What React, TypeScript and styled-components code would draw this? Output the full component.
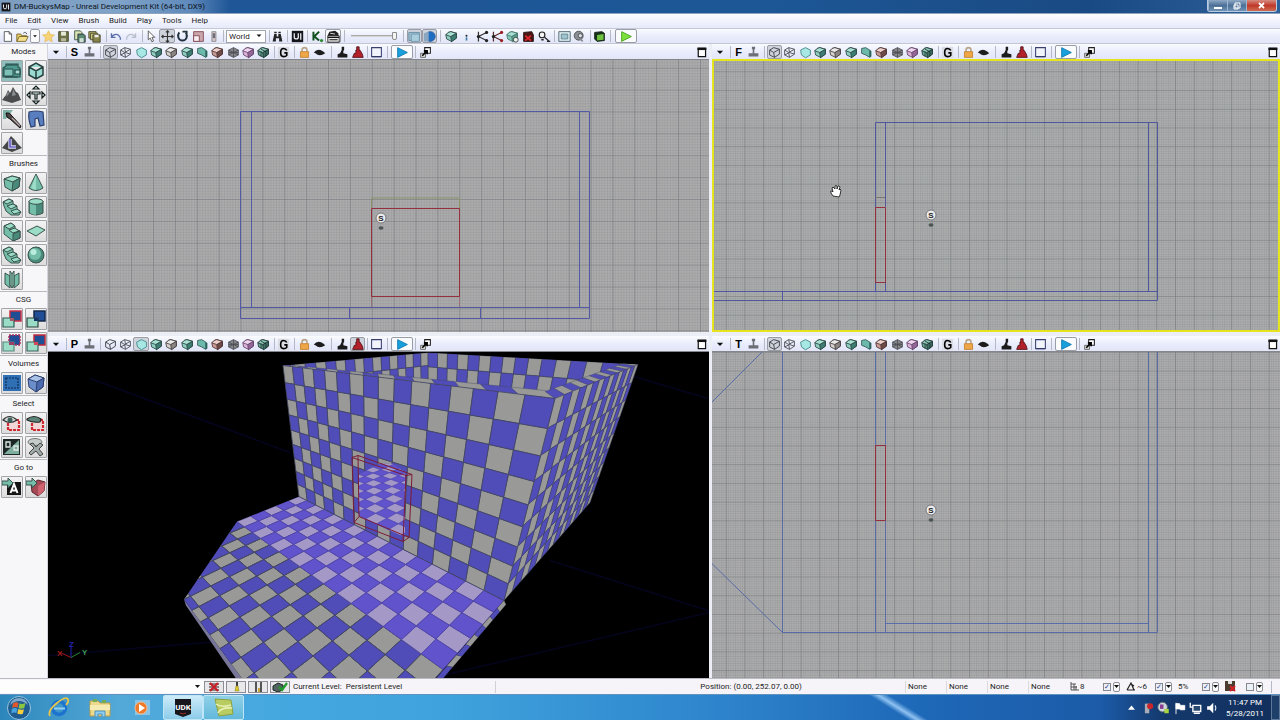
import React from 'react';
import styled, { createGlobalStyle, css } from 'styled-components';

const GlobalStyle = createGlobalStyle`
  * { box-sizing: border-box; }
  body { margin: 0; background: #f4f5fb; }
  body, button, input, select { font-family: Roboto, "Open Sans", sans-serif; font-size: 8px; line-height: 12px; color: #1c1c24; }
  button, select, input { margin: 0; padding: 0; }
`;

/* ---------- shell ---------- */

const Window = styled.div`
  display: flex;
  flex-direction: column;
  min-height: 100vh;
`;

const TitleBar = styled.header`
  display: flex;
  align-items: center;
  height: 14px;
  padding: 0 3px 0 1px;
  gap: 3px;
  background: linear-gradient(90deg, #7d9dc0 0, #7fa3c9 120px, #5f8abb 190px, #1f5697 230px, #1d5796 60%, #1a4a83 85%, #2d5f98 100%);
  border-bottom: 1px solid #8fa3be;
`;

const AppTitle = styled.h1`
  flex: 1;
  margin: 0;
  font-size: 8px;
  font-weight: 400;
  line-height: 12px;
  color: #0d1420;
`;

const CaptionButtons = styled.div`
  display: flex;
  align-self: flex-start;
  height: 12px;
  border: 1px solid #b9cce2;
  border-top: 0;
  border-radius: 0 0 3px 3px;
  overflow: hidden;
`;

const CaptionButton = styled.button<{ $close?: boolean }>`
  display: grid;
  place-items: center;
  width: ${(p) => (p.$close ? 30 : 19)}px;
  border: 0;
  border-left: 1px solid #9db6d0;
  background: ${(p) =>
    p.$close ? 'linear-gradient(#d58c80, #c0392a 50%, #cf6c50)' : 'linear-gradient(#8fa9c4, #4d7098 50%, #6f92b4)'};
`;

const MenuBar = styled.nav`
  display: flex;
  align-items: center;
  gap: 10px;
  height: 15px;
  padding: 0 5px;
  background: linear-gradient(#fdfdff, #e6eafa);
  border-bottom: 1px solid #c5c9d6;
`;

const MenuLink = styled.a`
  color: #1c1c24;
  text-decoration: none;
`;

const barBase = css`
  display: flex;
  align-items: center;
  background: linear-gradient(#fafbff, #e7ebfb 60%, #e2e6f6);
`;

const ToolBar = styled.div`
  ${barBase}
  height: 15px;
  border-bottom: 1px solid #c3c6d4;
`;

const ToolButton = styled.button<{ $pressed?: boolean; $framed?: boolean; $w?: number }>`
  display: grid;
  place-items: center;
  flex: none;
  width: ${(p) => p.$w ?? 15}px;
  height: 14px;
  border: 1px solid ${(p) => (p.$pressed || p.$framed ? '#9a9ca6' : 'transparent')};
  border-radius: 2px;
  background: ${(p) => (p.$pressed ? '#cfd3dc' : p.$framed ? '#fafbfd' : 'transparent')};
`;

const Separator = styled.span<{ $l?: number; $r?: number }>`
  flex: none;
  width: 1px;
  height: 12px;
  margin: 0 ${(p) => p.$r ?? 4}px 0 ${(p) => p.$l ?? 4}px;
  background: #b5b9c6;
`;

const SelectWrap = styled.label`
  display: grid;
  grid-template-columns: 1fr 10px;
  align-items: center;
  width: 40px;
  height: 13px;
  border: 1px solid #a3a5ad;
  background: #fff;
`;

const Select = styled.select`
  grid-column: 1 / -1;
  grid-row: 1;
  width: 100%;
  height: 11px;
  padding-left: 2px;
  border: 0;
  appearance: none;
  background: transparent;
  line-height: 11px;
`;

const SelectArrow = styled.svg`
  grid-column: 2;
  grid-row: 1;
  pointer-events: none;
`;

const Slider = styled.input`
  appearance: none;
  width: 46px;
  height: 12px;
  background: transparent;
  &::-webkit-slider-runnable-track { height: 2px; background: #d4d3cf; border-top: 1px solid #a9a9a9; }
  &::-webkit-slider-thumb { appearance: none; width: 5px; height: 8px; margin-top: -4px; background: #f4f4f2; border: 1px solid #8d8d8d; border-radius: 0 0 2px 2px; }
`;

const Main = styled.main`
  display: flex;
  flex: 1;
  min-height: 0;
`;

/* ---------- side palette ---------- */

const Palette = styled.aside`
  flex: none;
  width: 48px;
  background: #f7f7fa;
  border-right: 1px solid #d4d4dc;
`;

const PaletteSection = styled.section`
  padding: 0 1px;
  & + & { border-top: 1px solid #b9b9c0; }
`;

const PaletteTitle = styled.h2`
  margin: 0;
  height: 16px;
  font-size: 8px;
  font-weight: 400;
  line-height: 16px;
  text-align: center;
`;

const PaletteGrid = styled.div`
  display: grid;
  grid-template-columns: 22px 22px;
  column-gap: 2px;
  row-gap: 2px;
  padding-bottom: 1px;
`;

const PaletteButton = styled.button<{ $active?: boolean }>`
  display: grid;
  place-items: center;
  width: 22px;
  height: 22px;
  border: 1px solid #a2a4a8;
  border-radius: 1px;
  background: ${(p) => (p.$active ? '#8fc0bd' : 'linear-gradient(#f3f3f3, #dcdcdc)')};
`;

/* ---------- viewports ---------- */

const Viewports = styled.div`
  flex: 1;
  display: grid;
  grid-template-columns: 661fr 568fr;
  grid-template-rows: 288fr 342fr;
  column-gap: 3px;
  row-gap: 4px;
  min-width: 0;
  background: #eceef6;
`;

const Viewport = styled.section`
  display: flex;
  flex-direction: column;
  min-width: 0;
  min-height: 0;
`;

const ViewBar = styled.div`
  ${barBase}
  flex: none;
  height: 15px;
`;

const Spacer = styled.span`
  flex: 1;
`;

const ViewName = styled.strong`
  width: 15px;
  font-family: "Liberation Sans", Arial, sans-serif;
  font-size: 11px;
  line-height: 14px;
  text-align: center;
  color: #000;
`;

const Canvas = styled.div<{ $active?: boolean }>`
  flex: 1;
  display: grid;
  min-height: 0;
  overflow: hidden;
  background: #a5a6a7;
  border: ${(p) => (p.$active ? '2px solid #e6e41e' : '0')};
  border-top: ${(p) => (p.$active ? '2px solid #e6e41e' : '1px solid #85868c')};
`;

const Scene = styled.svg`
  display: block;
  width: 100%;
  height: 100%;
  min-height: 0;
  contain: size;
`;

/* ---------- status bar and taskbar ---------- */

const StatusBar = styled.footer`
  display: flex;
  align-items: center;
  height: 16px;
  border-top: 1px solid #b9bac2;
  background: #f6f4f8;
`;

const CommandBox = styled.label`
  display: flex;
  align-items: center;
  width: 204px;
  height: 13px;
  padding-right: 4px;
  background: #fdfdfe;
`;

const CommandInput = styled.input`
  flex: 1;
  min-width: 0;
  height: 11px;
  border: 0;
  background: transparent;
`;

const StatusButtons = styled.div`
  display: flex;
  gap: 2px;
  margin-right: 3px;
`;

const StatusButton = styled.button`
  display: grid;
  place-items: center;
  width: 20px;
  height: 12px;
  border: 1px solid #8d8f96;
  background: #e8e8ea;
`;

const StatusText = styled.span<{ $w?: number }>`
  flex: none;
  width: ${(p) => (p.$w ? `${p.$w}px` : 'auto')};
  white-space: pre;
`;

const StatusFlex = styled.span<{ $grow: number }>`
  flex: ${(p) => p.$grow} 1 0;
  white-space: pre;
  & + & { border-left: 1px solid #d0d0d6; }
`;

const StatusCell = styled(StatusText)`
  padding-left: 2px;
  border-left: 1px solid #d9d9de;
`;

const SnapGroup = styled.div<{ $w: number }>`
  display: flex;
  align-items: center;
  justify-content: flex-end;
  gap: 2px;
  width: ${(p) => p.$w}px;
`;

const SnapLabel = styled.label`
  display: flex;
  align-items: center;
  flex: 1;
  gap: 1px;
`;

const CheckBox = styled.input`
  appearance: none;
  display: grid;
  place-items: center;
  width: 8px;
  height: 8px;
  border: 1px solid #85888f;
  background: #eef0f8;
  &:checked::before { content: '✓'; font: bold 7px/6px "DejaVu Sans", sans-serif; color: #2b3f86; }
`;

const DropButton = styled.button`
  display: grid;
  place-items: center;
  width: 7px;
  height: 10px;
  border: 1px solid #8d8f96;
  border-radius: 2px;
  background: #fafafa;
`;

const TaskBar = styled.div`
  display: flex;
  align-items: center;
  height: 26px;
  border-top: 1px solid #5e93c2;
  background:
    linear-gradient(32deg, transparent 0 42%, rgba(170, 215, 255, 0.8) 49%, transparent 57%) calc(100% - 335px) 0 / 90px 26px no-repeat,
    linear-gradient(90deg, #2d86bb 0, #53a9d8 120px, #47a9e0 240px, #3fa2dc 35%, #2f86cd 55%, #1e68b8 72%, #1c5ba8 86%, #14386c 91%, #122f5c 100%);
`;

const TaskButton = styled.button<{ $w: number; $state?: 'open' | 'active' }>`
  display: grid;
  place-items: center;
  width: ${(p) => p.$w}px;
  height: 25px;
  border: 1px solid ${(p) => (p.$state ? '#bfe6f7' : 'transparent')};
  border-radius: 2px;
  background: ${(p) =>
    p.$state === 'active'
      ? 'linear-gradient(#cdebf8, #8ccbea)'
      : p.$state === 'open'
        ? 'linear-gradient(#8fd0e6, #62b8dc)'
        : 'transparent'};
`;

const Tray = styled.div`
  display: flex;
  align-items: center;
  margin-left: auto;
  gap: 1px;
`;

const Clock = styled.time`
  display: flex;
  flex-direction: column;
  align-items: center;
  width: 50px;
  padding-top: 1px;
  color: #fff;
  font-size: 8px;
  line-height: 11px;
`;

const ShowDesktop = styled.button`
  width: 9px;
  height: 25px;
  border: 1px solid #5d7899;
  background: #1f3f6b;
`;

/* ---------- icons ---------- */

function Cube({ top = '#a9e0d4', left = '#8fcfc2', right = '#3e7d74', line = '#26403e' }) {
  return (
    <g stroke={line} strokeWidth="1" strokeLinejoin="round">
      <path d="M1 6q3-4 6-4l7 2v6l-6 4-6-3z" fill={left} />
      <path d="M7 8l7-4v6l-6 4.500z" fill={right} />
      <path d="M1 6q3-4 6-4l7 2-7 4z" fill={top} />
    </g>
  );
}

const glyphs: Record<string, React.ReactNode> = {
  down: <path d="M3 6h10l-5 5z" fill="#111" />,
  file: <path d="M4 2h6l3 3v9H4zM10 2v3h3" fill="#fff" stroke="#444" />,
  folder: <><path d="M1 14V5h5l1 2h6v2" fill="#e8cf6a" stroke="#6d5a1a" /><path d="M1 14l3-6h11l-3 6z" fill="#f4e08c" stroke="#6d5a1a" /><path d="M9 4c2-2 4-1 4 1" fill="none" stroke="#333" /></>,
  star: <path d="M8 1l2.200 4.600 5 .6-3.700 3.400 1 5L8 12l-4.500 2.600 1-5L.800 6.200l5-.6z" fill="#f7d377" stroke="#e6bd5a" />,
  save: <><path d="M2 2h12v12H2z" fill="#6d7145" stroke="#44462a" /><path d="M5 2h6v5H5z" fill="#e8ead8" /><path d="M5 10h6v4H5z" fill="#b7b99d" /></>,
  saveAll: <><path d="M2 1h7l2 2v9H2z" fill="#d8e4b4" stroke="#2f4a3a" /><path d="M6 5h7l2 2v8H6z" fill="#5d8a72" stroke="#223" /><path d="M8 10h5v5H8z" fill="#cfe0d4" /></>,
  copies: <><path d="M1 2h9v8H1z" fill="#b7b56b" stroke="#3d3c20" /><path d="M3 4h9v8H3z" fill="#c9c780" stroke="#3d3c20" /><path d="M6 6h9v9H6z" fill="#85834a" stroke="#3d3c20" /><path d="M8 6h5v3H8z" fill="#eee" /></>,
  undo: <path d="M3 4v5h5M3 9c3-5 9-5 11 1v2" fill="none" stroke="#5b6fa8" strokeWidth="1.600" />,
  redo: <path d="M13 4v5H8M13 9C10 4 4 4 2 10v2" fill="none" stroke="#b9bfcc" strokeWidth="1.600" />,
  pointer: <path d="M4 1l8 8H8.500l2 4.500-2 1-2-4.500L4 12z" fill="#fff" stroke="#444" />,
  move: <path d="M8 1v14M1 8h14M6 3l2-2 2 2M6 13l2 2 2-2M3 6L1 8l2 2M13 6l2 2-2 2" fill="none" stroke="#333" strokeWidth="1.400" />,
  rotate: <path d="M4 3c-3 4-1 10 4 10s7-6 4-10M8 2h5v5" fill="none" stroke="#22303f" strokeWidth="2.400" />,
  scale: <><path d="M2 2h12v12H2z" fill="#caa6ac" stroke="#7c3f4a" /><path d="M2 7h7v7H2z" fill="#f6eef0" stroke="#7c3f4a" /></>,
  scaleNU: <><path d="M6 2h5v12H6z" fill="#d4c3c8" stroke="#888" /><path d="M7 4h3v6H7z" fill="#6c6f79" /></>,
  find: <path d="M2 14l2-9h3v3h2V5h3l2 9h-4v-4H6v4zM4 2h3v2H4zM9 2h3v2H9z" fill="#232323" />,
  udkSmall: <><path d="M1 1h14v14H1z" fill="#14161c" /><path d="M4 4v4.500q0 2.500 2.500 2.500T9 8.500V4M12 4v8" fill="none" stroke="#e8e8ee" strokeWidth="1.600" /></>,
  kismet: <><path d="M3 2v11M10 2L4 8l6 5" fill="none" stroke="#12501f" strokeWidth="2.400" /><circle cx="13" cy="13" r="2" fill="#2f8a35" /></>,
  matinee: <><path d="M1 7h14v8H1z" fill="#e9e9ec" stroke="#111" /><path d="M1 6l2-4 7-1 4 3v3H1z" fill="#222" /><path d="M3 4l8 1M1 9h14M3 12h10" stroke="#111" strokeWidth="1.500" /><path d="M4 4l6 1" stroke="#fff" /></>,
  browser: <><path d="M1 3h13v10H1z" fill="#9dbfd2" stroke="#5d879f" /><path d="M4 5h10v9H4z" fill="#a9cddd" stroke="#6c93a9" /></>,
  world: <><circle cx="9" cy="8" r="6" fill="#1f6dc2" stroke="#2a5a98" /><path d="M7 2v12H1V4z" fill="#8ba6c0" /></>,
  dot: <><circle cx="8" cy="7" r="1.200" fill="#222" /><path d="M8 9v4" stroke="#3b7fa0" strokeWidth="2" /></>,
  joint: <><path d="M3 2v12M3 8l10-5M3 8l10 5" fill="none" stroke="#333" strokeWidth="1.500" /><circle cx="13" cy="3" r="2" fill="#222" /><circle cx="13" cy="13" r="2" fill="#222" /><circle cx="3" cy="8" r="2" fill="#222" /></>,
  jointRed: <><path d="M3 2v12M3 8l10-5M3 8l10 5" fill="none" stroke="#5a2a2a" strokeWidth="1.500" /><circle cx="13" cy="3" r="2" fill="#9c1f1f" /><circle cx="13" cy="13" r="2" fill="#9c1f1f" /><circle cx="3" cy="8" r="2" fill="#222" /></>,
  cubeTeal: <Cube />,
  cubeSearch: <><Cube top="#a8ded1" left="#83c9b8" right="#5aa090" line="#3f7468" /><circle cx="12" cy="12" r="3" fill="#e7f2f0" stroke="#333" /></>,
  redBox: <><path d="M2 3l10-1 2 4v8H2z" fill="#4b1616" stroke="#1e0808" /><path d="M4 7l7 6M11 7l-7 6" stroke="#e0262c" strokeWidth="2.200" /></>,
  light: <><circle cx="5" cy="6" r="3.500" fill="#f5f5f5" stroke="#222" strokeWidth="1.400" /><path d="M4 12h3M8 9l6 5M11 14h4" stroke="#222" strokeWidth="1.600" /></>,
  panel: <><path d="M1 2h14v12H1z" fill="#dcecf0" stroke="#3d5560" /><path d="M4 5h8v6H4z" fill="#9fc4cd" stroke="#5b7c86" /></>,
  sphere: <><circle cx="7" cy="7" r="5.500" fill="#8a8d92" stroke="#44464c" /><circle cx="9" cy="7" r="2.500" fill="#e4e6ea" stroke="#44464c" /><path d="M9 11l3 3" stroke="#8a8d92" strokeWidth="2" /></>,
  greenBox: <><path d="M2 3l9-1 3 2v9l-9 1-3-3z" fill="#16301a" stroke="#0b190d" /><path d="M5 6l8-1v7l-8 1z" fill="#6fc33f" /></>,
  play: <path d="M2 2l12 6-12 6z" fill="#7be03c" stroke="#3c9a12" />,
  playBlue: <path d="M2 2l12 6-12 6z" fill="#18a0dc" stroke="#0f74ac" />,
  joystick: <path d="M6 1h4v3H9v5h5v4H2V9h5V4H6z" fill="#6d6f77" />,
  cubeWire: <path d="M2 5l5-3 7 2v6l-6 4-6-3zM2 5l5 3 7-4M7 8l1 6" fill="none" stroke="#45484f" strokeWidth="1.200" />,
  cubeWire2: <path d="M2 5l5-3 7 2v6l-6 4-6-3zM2 5l5 3 7-4M7 8l1 6M2 11l6-3 6 2M7 2l1 6" fill="none" stroke="#55585f" strokeWidth="1.200" />,
  cubeFlat: <path d="M2 5l6-3 6 3v6l-6 3.500L3 11z" fill="#a8e8e4" stroke="#4d8f90" strokeWidth="1.200" />,
  cubeGray: <Cube top="#e9e9ea" left="#d6d2cf" right="#8a8482" line="#3c3836" />,
  cubeOpen: <><path d="M2 3l5-1 5 3v9L7 11 2 9z" fill="#6db9ac" stroke="#28514b" /><path d="M12 5l2 1v7l-2 1z" fill="#25655c" /></>,
  cubeRose: <Cube top="#ecd0cb" left="#c79b96" right="#6e4a48" line="#4a2f30" />,
  cubeDark: <path d="M2 5l6-3 6 3v6l-6 3-6-3zM2 5l12 6M14 5L2 11M8 2v12M2 8h12" fill="#85878c" stroke="#4b4d52" />,
  cubePink: <Cube top="#efd5ee" left="#dcb3da" right="#94679a" line="#5e3f63" />,
  cubeMesh: <><Cube top="#8ec7b9" left="#6aa998" right="#3c6f65" line="#1d3330" /><path d="M5 4l6 3M5 7v6M11 7v6" stroke="#1d3330" /></>,
  letterG: <><path d="M1 1h14v14H1z" fill="#dcdde4" /><path d="M12 5.500Q11 3 8 3 4.500 3 4.500 8T8 13q3 0 4-1.500V8.500H9" fill="none" stroke="#000" strokeWidth="2" /></>,
  lock: <><path d="M5 7V5q0-3 3-3t3 3v2" fill="none" stroke="#b9a58a" strokeWidth="2" /><path d="M3 7h10v7H3z" fill="#eea646" stroke="#c17d27" /></>,
  eye: <path d="M1 8q5-6 12-1l2 2Q8 14 3 9zM5 7h5v3H5z" fill="#1d1d1d" />,
  actor: <path d="M7 1h3v4l-1 1v3l5 1v4H2v-4l3-1 2-4z" fill="#1b1b1b" />,
  actorRed: <path d="M7 1h3v4h1l3 5 1 4H2l2-5h2V5h1z" fill="#b3202a" stroke="#4a0f13" />,
  frame: <><path d="M2 2h12v11H2z" fill="#f2f4fb" stroke="#39406f" strokeWidth="1.300" /><path d="M2 13h12v1H2z" fill="#2b3260" /></>,
  popOut: <><path d="M7 2h7v7H7z" fill="#fff" stroke="#222" strokeWidth="1.300" /><path d="M2 9h6v5H2z" fill="#ddd" stroke="#555" /><path d="M4 12l5-5M6 6h4v4" fill="none" stroke="#000" strokeWidth="2" /></>,
  maximize: <><path d="M4 3h9v10H4z" fill="#fff" stroke="#111" strokeWidth="1.500" /><path d="M3 2h11v3H3z" fill="#111" /></>,
};

function Icon({ name, size = 13 }: { name: string; size?: number }) {
  return (
    <svg width={size} height={size} viewBox="0 0 16 16" aria-hidden="true">
      {glyphs[name]}
    </svg>
  );
}

const teal = '#9bdcc6';
const tealMid = '#74bda8';
const tealDark = '#4a8a7a';
const ink = '#3a524d';

const steps = (
  <g stroke={ink} strokeLinejoin="round">
    <path d="M2 5l7-3 4 3v3l5 2v7l-7 3-9-7z" fill={tealMid} />
    <path d="M2 5l7-3 4 3-6 3zM7 9l6-2 4 3-6 2z" fill={teal} />
    <path d="M11 13l7-3v7l-7 3z" fill={tealDark} />
  </g>
);
const curvedSteps = (
  <g stroke={ink} strokeLinejoin="round">
    <path d="M1 5l6-3 4 2v3l4 2v3l4 3-2 3H9L4 14 2 9z" fill={tealMid} />
    <path d="M1 5l6-3 4 2-6 3zM5 9l6-2 4 2-6 3zM9 14l6-2 4 3-7 2z" fill={teal} />
  </g>
);
const csg = (back: string, front: string, x: number, dash?: boolean, mid = tealMid) => (
  <>
    <path d={`M${x} 2h11v10H${x}z`} fill="#1f4d96" stroke={back} strokeWidth="1.500" strokeDasharray={dash ? '2 1' : undefined} />
    <path d="M1 9h11v9H1z" fill={teal} stroke={front} strokeWidth="1.200" />
    <path d={`M${x} 9H12v3H${x}z`} fill={mid} />
  </>
);

const paletteGlyphs: Record<string, React.ReactNode> = {
  camera: <><path d="M1 7l3-2V3h12v3l2 1v9H1z" fill="#4f9a92" stroke="#2a4f4c" strokeWidth="1.200" /><path d="M2 8h9v7H2z" fill="#7cc0b6" stroke="#2a4f4c" /><path d="M13 9h5v4h-5zM5 4h10M3 16h13" stroke="#234643" strokeWidth="1.200" fill="#a6dcd4" /></>,
  geometry: <path d="M3 6l7-4 7 4v8l-7 4-7-4zM3 6l7 4 7-4M10 10v8" fill="#9ad9cf" stroke="#24403f" strokeWidth="1.500" />,
  terrain: <><path d="M0 15l4-5 2-5 2 3 3-6 3 5 2 1 3 7-9 3z" fill="#4a4c4e" /><path d="M6 6l-2 6 3-3zM11 4l-1 7 4-1z" fill="#8d9092" /></>,
  texture: <path d="M7 4l3-3 3 3zM7 16l3 3 3-3zM4 7l-3 3 3 3zM16 7l3 3-3 3zM6 7h8v2h-3v5H9V9H6z" fill="#e3efec" stroke="#14201f" strokeWidth="1.200" />,
  brush: <><path d="M1 1h10L4 10H1z" fill="#7fb2a6" /><path d="M4 4q0 5 4 6l10 9 1-2L10 7Q8 3 4 4z" fill="#4d4444" stroke="#111" /><path d="M10 9l8 8" stroke="#b9a9a9" strokeWidth="1.200" /></>,
  cloth: <path d="M3 3q7-2 14 0l1 13-4 1-2-8-3 1 0 7-4 1q-3-8-2-15z" fill="#5a7fc0" stroke="#2b3f6e" strokeWidth="1.200" />,
  landscape: <><path d="M0 15l5-6 4-6 4 4 3 4 4 4-10 4z" fill="#454648" /><path d="M8 6v8h6" fill="none" stroke="#d9d7f4" strokeWidth="3.400" /><path d="M8 6v8h6" fill="none" stroke="#3d38b4" strokeWidth="1.200" /></>,
  cube: <g stroke={ink} strokeLinejoin="round"><path d="M2 6l8-3 8 2-1 9-7 4-7-4z" fill={tealMid} /><path d="M2 6l8-3 8 2-7 4z" fill={teal} /><path d="M11 9l7-4-1 9-7 4z" fill={tealDark} /></g>,
  cone: <><path d="M10 1l7 14q-7 5-14 0z" fill={tealMid} stroke={ink} /><path d="M10 2L5 15q3 2 5 2z" fill={teal} /></>,
  curved: curvedSteps,
  cylinder: <><path d="M3 4v12q7 4 14 0V4" fill={tealDark} stroke={ink} /><path d="M4 5v11q3 2 6 2V5z" fill={tealMid} /><ellipse cx="10" cy="4.500" rx="7" ry="2.800" fill={teal} stroke={ink} /></>,
  linear: steps,
  sheet: <path d="M1 10l10-5 8 4-9 6z" fill={teal} stroke={ink} />,
  spiral: curvedSteps,
  ball: <><circle cx="10" cy="10" r="8" fill={tealDark} stroke={ink} /><circle cx="9" cy="9" r="6" fill={tealMid} /><circle cx="7.500" cy="7" r="3" fill="#b9ecdc" /></>,
  volumetric: <g stroke={ink} strokeLinejoin="round"><path d="M3 4l5 3v12l-5-4zM17 4l-5 3v12l5-4z" fill={tealMid} /><path d="M8 2l2 3 2-3v14l-2 3-2-3zM10 5v13" fill={teal} /></g>,
  add: csg('#c93143', '#2f5a55', 8, false, '#a2596b'),
  subtract: csg('#14284c', '#2b433f', 8, false, '#123468'),
  intersect: csg('#b32f5c', '#58877e', 7, true, '#9a3f66'),
  deintersect: csg('#c02a3a', '#3a635c', 8, false, '#d4455a'),
  volume: <><path d="M1 2h18v16H1z" fill="#2f6fb4" /><path d="M4 5h12v10H4z" fill="none" stroke="#0f2c58" strokeWidth="1.200" strokeDasharray="2 1" /></>,
  volumeCube: <g stroke="#2e4070"><path d="M2 6l7-4 9 3-1 9-7 5-7-5z" fill="#6a8ec9" /><path d="M2 6l7-4 9 3-7 4z" fill="#a9c2e8" /><path d="M11 9l7-4-1 9-7 5z" fill="#4a6bb0" /></g>,
  show: <><path d="M6 7h11v10H6z" fill="#f0d6d6" stroke="#cf2a31" strokeWidth="2.200" strokeDasharray="3 1" /><path d="M1 7q6-7 14 0-7 5-14 0z" fill="#cfd8d6" stroke="#333" strokeWidth="1.200" /><circle cx="8" cy="7" r="2.500" fill="#3a615a" /></>,
  hide: <><path d="M6 7h11v10H6z" fill="#f0d6d6" stroke="#cf2a31" strokeWidth="2.200" strokeDasharray="3 1" /><path d="M1 6q7-5 14 0l-1 3Q7 10 1 7z" fill="#5c8479" stroke="#222" strokeWidth="1.200" /></>,
  invert: <><path d="M1 2h17v16H1z" fill="#1d2826" /><path d="M2 17L17 3v14z" fill="#7fae9f" /><path d="M4 5h4v5H4zM12 9h4v4h-4z" fill="none" stroke="#dfe8e5" strokeWidth="1.300" /></>,
  clear: <><ellipse cx="9" cy="5" rx="7" ry="3.500" fill="#c4cbc9" stroke="#777" /><path d="M4 7l3-1 3 4 4-4 3 2-4 4 4 5-3 2-4-5-5 4-2-2 5-5z" fill="#9fa9a7" stroke="#444" /></>,
  gotoActor: <><path d="M5 5h14v13H5z" fill="#141414" /><path d="M8.500 16L12 7l3.500 9M10 13.500h4" fill="none" stroke="#fff" strokeWidth="2" /><path d="M0 4h6V1l5 5-5 5V8H0z" fill={tealMid} stroke={ink} /></>,
  gotoBrush: <><path d="M5 7l7-4 7 2-1 9-6 5-6-4z" fill="#a34a55" stroke="#5c232c" /><path d="M12 9l7-4-1 9-6 5z" fill="#cf6470" /><path d="M0 4h6V1l5 5-5 5V8H0z" fill={tealMid} stroke={ink} /></>,
};

const paletteSections: { title: string; tools: string[] }[] = [
  { title: 'Modes', tools: ['camera', 'geometry', 'terrain', 'texture', 'brush', 'cloth', 'landscape'] },
  { title: 'Brushes', tools: ['cube', 'cone', 'curved', 'cylinder', 'linear', 'sheet', 'spiral', 'ball', 'volumetric'] },
  { title: 'CSG', tools: ['add', 'subtract', 'intersect', 'deintersect'] },
  { title: 'Volumes', tools: ['volume', 'volumeCube'] },
  { title: 'Select', tools: ['show', 'hide', 'invert', 'clear'] },
  { title: 'Go to', tools: ['gotoActor', 'gotoBrush'] },
];

/* ---------- perspective drawing ---------- */

type Pt = [number, number];
type Quad = [Pt, Pt, Pt, Pt];

/* Maps the unit square onto a quad, keeping straight lines straight. */
function projector([p0, p1, p2, p3]: Quad) {
  const dx1 = p1[0] - p2[0];
  const dx2 = p3[0] - p2[0];
  const sx = p0[0] - p1[0] + p2[0] - p3[0];
  const dy1 = p1[1] - p2[1];
  const dy2 = p3[1] - p2[1];
  const sy = p0[1] - p1[1] + p2[1] - p3[1];
  const det = dx1 * dy2 - dx2 * dy1;
  const g = (sx * dy2 - dx2 * sy) / det;
  const h = (dx1 * sy - sx * dy1) / det;
  const a = p1[0] - p0[0] + g * p1[0];
  const b = p3[0] - p0[0] + h * p3[0];
  const d = p1[1] - p0[1] + g * p1[1];
  const e = p3[1] - p0[1] + h * p3[1];
  return (u: number, v: number): Pt | null => {
    const w = g * u + h * v + 1;
    if (w < 0.03) return null;
    return [(a * u + b * v + p0[0]) / w, (d * u + e * v + p0[1]) / w];
  };
}

interface CheckerProps {
  quad: Quad;
  cols: number;
  rows: number;
  from?: number;
  to?: number;
  lit?: boolean;
  flip?: boolean;
  line?: number;
}

function Checker({ quad, cols, rows, from = 0, to = rows, lit, flip, line = 0.8 }: CheckerProps) {
  const project = projector(quad);
  const paths = ['', ''];
  for (let r = from; r < to; r++) {
    for (let c = 0; c < cols; c++) {
      const pts = [[c, r], [c + 1, r], [c + 1, r + 1], [c, r + 1]].map(([x, y]) => project(x / cols, y / rows));
      if (pts.some((p) => p === null)) continue;
      const odd = Math.abs(c + r + (flip ? 1 : 0)) % 2;
      paths[odd] += `M${pts.map((p) => `${p![0].toFixed(2)} ${p![1].toFixed(2)}`).join('L')}Z`;
    }
  }
  const colors = lit ? ['#a398c6', '#6053cb'] : ['#999a98', '#504cb8'];
  const stroke = lit ? '#5348a8' : '#454962';
  return (
    <g stroke={stroke} strokeWidth={line}>
      <path d={paths[0]} fill={colors[0]} />
      <path d={paths[1]} fill={colors[1]} />
    </g>
  );
}

const frontWall: Quad = [[283, 365], [555, 398], [504, 600], [299, 496]];
const rightWall: Quad = [[555, 398], [638, 364], [590, 502], [504, 600]];
const leftInner: Quad = [[283, 365], [428, 352], [429, 460], [299, 496]];
const backInner: Quad = [[428, 352], [638, 364], [590, 502], [429, 460]];
const floor: Quad = [[299, 496], [504, 600], [443, 669], [237, 521]];

function PerspectiveScene() {
  return (
    <Scene viewBox="48 351 661 327" preserveAspectRatio="xMidYMid slice" role="img" aria-label="Perspective view">
      <defs>
        <clipPath id="floorClip"><path d="M299 496L237 521 184 599 242 678H436L504 600z" /></clipPath>
        <clipPath id="roomClip"><path d="M283 365L428 352 638 364 555 398z" /></clipPath>
        <clipPath id="doorClip"><path d="M359 474L380 463 392 463 405 472V537L359 516z" /></clipPath>
      </defs>
      <rect x="-400" y="0" width="1600" height="1000" fill="#000" />
      <path d="M90 378L290 452M48 655L230 640M550 560L708 610M620 372L708 398M430 678L760 600" stroke="#04041f" strokeWidth="1.500" />
      <path d="M184 599l2 6 50 73h6z" fill="#777698" />
      <g clipPath="url(#floorClip)">
        <Checker quad={floor} cols={16} rows={5} from={5} to={22} line={1} />
        <Checker quad={floor} cols={16} rows={5} lit />
      </g>
      <Checker quad={[[504, 600], [436, 678], [443, 678], [506, 604]]} cols={8} rows={1} line={0.2} />
      <g clipPath="url(#roomClip)">
        <Checker quad={leftInner} cols={16} rows={9} flip line={0.6} />
        <Checker quad={backInner} cols={16} rows={9} flip line={0.6} />
        <Checker quad={[[283, 364], [545, 390], [555, 398], [283, 367]]} cols={16} rows={1} line={0.4} flip />
        <Checker quad={[[545, 391], [626, 362], [638, 364], [555, 398]]} cols={14} rows={1} line={0.4} flip />
      </g>
      <Checker quad={rightWall} cols={15} rows={9} line={0.5} />
      <Checker quad={frontWall} cols={16} rows={9} line={0.8} />
      <g clipPath="url(#doorClip)">
        <rect x="350" y="455" width="70" height="90" fill="#6053cb" />
        <Checker quad={floor} cols={16} rows={5} from={-14} to={5} lit line={0.4} />
      </g>
      <g fill="none" stroke="#7c1b35" strokeWidth="1">
        <path d="M352 457L406 475 403 541 354 522z" />
        <path d="M358 455L412 474 409 537 359 516z" />
        <path d="M352 457l6-2M406 475l6-1M403 541l6-4M354 522l5-6" />
      </g>
      <g fill="none" strokeWidth="1">
        <path d="M71 657L60 652" stroke="#a01818" />
        <path d="M71 657l9-5" stroke="#2c8a2c" />
        <path d="M71 657v-12" stroke="#2525b0" />
      </g>
      <g fontFamily="Liberation Sans, Arial, sans-serif" fontSize="8" fontWeight="700">
        <text x="57" y="655" fill="#a01818">X</text>
        <text x="82" y="654" fill="#3c9a5c">Y</text>
        <text x="69" y="646" fill="#2525b0">Z</text>
      </g>
    </Scene>
  );
}

/* ---------- orthographic views ---------- */

function GridFill({ id, step, box, ox, oy, base }: { id: string; step: number; box: number[]; ox: number; oy: number; base: string }) {
  const minor = step / 4;
  const area = { x: box[0] - 400, y: box[1] - 400, width: box[2] + 800, height: box[3] + 800 };
  return (
    <>
      <defs>
        <pattern id={`${id}-minor`} x={ox} y={oy} width={minor} height={minor} patternUnits="userSpaceOnUse">
          <path d={`M0 ${minor}V0H${minor}`} fill="none" stroke="#83858c" strokeWidth="0.800" />
        </pattern>
        <pattern id={`${id}-major`} x={ox} y={oy} width={step * 2} height={step * 2} patternUnits="userSpaceOnUse">
          <path d={`M0 ${step * 2}V0H${step * 2}`} fill="none" stroke="#65686e" strokeWidth="1.200" />
        </pattern>
      </defs>
      <rect {...area} fill={base} />
      <rect {...area} fill={`url(#${id}-minor)`} opacity="0.600" />
      <rect {...area} fill={`url(#${id}-major)`} opacity="0.700" />
    </>
  );
}

function PlayerStart({ x, y }: { x: number; y: number }) {
  return (
    <g>
      <circle cx={x} cy={y} r="5" fill="#ececec" stroke="#77787c" />
      <text x={x} y={y + 3} textAnchor="middle" fontFamily="Liberation Sans, Arial, sans-serif" fontSize="8" fontWeight="700" fill="#222">S</text>
      <ellipse cx={x} cy={y + 10} rx="2.500" ry="1.800" fill="#4c5552" />
    </g>
  );
}

function SideScene() {
  return (
    <Scene viewBox="48 60 661 272" preserveAspectRatio="xMidYMid slice" role="img" aria-label="Side view">
      <GridFill id="side" step={10.94} box={[48, 60, 661, 272]} ox={240.5} oy={111.5} base="#acacac" />
      <g fill="none" strokeWidth="1">
        <path d="M240.500 111.500h349v207h-349zM251.500 111v196M579.500 111v196M240 307.500h349M349.500 307v11M480.500 307v11" stroke="#5459a6" />
        <path d="M371.500 208v-10h88v10" stroke="#8a9468" />
        <path d="M371.500 296v11M459.500 296v11" stroke="#9a7078" />
        <path d="M371.500 208.500h88v88h-88z" stroke="#94303e" />
      </g>
      <PlayerStart x={381} y={218} />
    </Scene>
  );
}

function FrontScene() {
  return (
    <Scene viewBox="714 61 564 269" preserveAspectRatio="xMidYMid slice" role="img" aria-label="Front view">
      <GridFill id="front" step={9.36} box={[714, 61, 564, 269]} ox={875.5} oy={127.5} base="#abaeac" />
      <g fill="none" strokeWidth="1">
        <path d="M875.500 291v-168.500h282v178H600M600 291.500h557M885.500 122v85M1148.500 122v169M782.500 291v9M875.500 282v9M885.500 282v9" stroke="#50579c" />
        <path d="M875 197.500h10" stroke="#7c756c" />
        <path d="M875.500 207.500h10v75h-10z" stroke="#94303e" />
      </g>
      <PlayerStart x={931} y={215} />
      <path d="M833 196l-2-3q-1-3 1-2l1 1-1-4q1-2 2 0l1 1v-3q1-1 2 0v3l1-3q1-1 2 1l-1 3q1-2 2 0l-1 5-1 2z" fill="#fff" stroke="#222" strokeWidth="0.900" />
    </Scene>
  );
}

function TopScene() {
  return (
    <Scene viewBox="712 352 568 326" preserveAspectRatio="xMidYMid slice" role="img" aria-label="Top view">
      <GridFill id="top" step={9.36} box={[712, 352, 568, 326]} ox={875.5} oy={445.5} base="#acacac" />
      <g fill="none" strokeWidth="1">
        <path d="M782.500 200V632.500h375V200M875.500 200v432M885.500 200v432M885 623.500h263M1148.500 200v432M700 414L800 314M700 552l82 80" stroke="#586ca8" />
        <path d="M875.500 445.500h10v75h-10z" stroke="#94303e" />
      </g>
      <PlayerStart x={931} y={510} />
    </Scene>
  );
}

/* ---------- assembled parts ---------- */

const Tool = ({ name, size, ...rest }: { name: string; size?: number; $pressed?: boolean; $framed?: boolean; $w?: number }) => (
  <ToolButton type="button" aria-label={name} {...rest}>
    <Icon name={name} size={size} />
  </ToolButton>
);

const shading = ['cubeWire2', 'cubeFlat', 'cubeTeal', 'cubeGray', 'cubeTeal', 'cubeOpen', 'cubeRose', 'cubeDark', 'cubePink', 'cubeMesh'];

function ViewToolbar({ letter, perspective }: { letter: string; perspective?: boolean }) {
  return (
    <ViewBar role="toolbar" aria-label={`View ${letter}`}>
      <Tool name="down" size={10} />
      <Separator $l={3} $r={0} />
      <ViewName>{letter}</ViewName>
      <Tool name="joystick" />
      <Separator $l={3} $r={2} />
      <Tool name="cubeWire" $pressed={!perspective} />
      {shading.map((name, i) => (
        <Tool key={i} name={name} $pressed={perspective && name === 'cubeFlat'} $w={i % 3 === 1 ? 16 : 15} />
      ))}
      <Separator $l={3} $r={1} />
      <Tool name="letterG" />
      <Separator $l={3} $r={2} />
      <Tool name="lock" />
      <Tool name="eye" />
      <Separator $l={4} $r={2} />
      <Tool name="actor" $w={16} />
      <Tool name="actorRed" $pressed={perspective} />
      <Separator $l={2} $r={1} />
      <Tool name="frame" />
      <Separator $l={3} $r={3} />
      <Tool name="playBlue" $framed $w={22} />
      <Separator $l={2} $r={2} />
      <Tool name="popOut" />
      <Spacer />
      <Tool name="maximize" />
    </ViewBar>
  );
}

function MainToolbar() {
  return (
    <ToolBar role="toolbar" aria-label="Main">
      <Tool name="file" />
      <Tool name="folder" />
      <Tool name="down" size={6} $framed $w={10} />
      <Tool name="star" $w={16} />
      <Tool name="save" />
      <Tool name="saveAll" $w={16} />
      <Tool name="copies" />
      <Separator $l={4} $r={1} />
      <Tool name="undo" />
      <Tool name="redo" $w={16} />
      <Separator $l={3} $r={1} />
      <Tool name="pointer" />
      <Tool name="move" $pressed $w={16} />
      <Tool name="rotate" />
      <Tool name="scale" $w={16} />
      <Tool name="scaleNU" />
      <Separator $l={2} $r={2} />
      <SelectWrap>
        <Select aria-label="Coordinate system" defaultValue="World">
          <option>World</option>
          <option>Local</option>
        </Select>
        <SelectArrow width="8" height="8" viewBox="0 0 16 16"><path d="M3 5h10l-5 5z" fill="#111" /></SelectArrow>
      </SelectWrap>
      <Separator $l={3} $r={0} />
      <Tool name="find" />
      <Separator $l={2} $r={2} />
      <Tool name="udkSmall" />
      <Separator $l={2} $r={2} />
      <Tool name="kismet" />
      <Tool name="matinee" $framed $w={16} />
      <Separator $l={3} $r={6} />
      <Slider type="range" aria-label="Far clip" defaultValue={100} />
      <Separator $l={6} $r={3} />
      <Tool name="browser" $pressed />
      <Tool name="world" $pressed />
      <Separator $l={3} $r={2} />
      <Tool name="cubeTeal" $w={16} />
      <Tool name="dot" />
      <Tool name="joint" $w={16} />
      <Tool name="jointRed" />
      <Tool name="cubeSearch" />
      <Tool name="redBox" $w={16} />
      <Tool name="light" $w={16} />
      <Separator $l={2} $r={2} />
      <Tool name="panel" />
      <Tool name="sphere" />
      <Separator $l={3} $r={1} />
      <Tool name="greenBox" />
      <Separator $l={3} $r={4} />
      <Tool name="play" $framed $w={22} />
    </ToolBar>
  );
}

function SidePalette() {
  return (
    <Palette>
      {paletteSections.map(({ title, tools }) => (
        <PaletteSection key={title}>
          <PaletteTitle>{title}</PaletteTitle>
          <PaletteGrid>
            {tools.map((tool) => (
              <PaletteButton key={tool} type="button" aria-label={tool} $active={tool === 'camera'}>
                <svg width="20" height="20" viewBox="0 0 20 20" aria-hidden="true">{paletteGlyphs[tool]}</svg>
              </PaletteButton>
            ))}
          </PaletteGrid>
        </PaletteSection>
      ))}
    </Palette>
  );
}

const SmallArrow = () => (
  <svg width="5" height="5" viewBox="0 0 5 5" aria-hidden="true"><path d="M0 1h5L2.500 4z" fill="#111" /></svg>
);

function Snap({ width, label, icon, checked = true, name }: { width: number; label?: string; icon?: React.ReactNode; checked?: boolean; name: string }) {
  return (
    <SnapGroup $w={width}>
      <SnapLabel htmlFor={name}>{icon}{label}</SnapLabel>
      <CheckBox id={name} type="checkbox" defaultChecked={checked} aria-label={name} />
      <DropButton type="button" aria-label={`${name} options`}><SmallArrow /></DropButton>
    </SnapGroup>
  );
}

function Status() {
  return (
    <StatusBar>
      <CommandBox>
        <CommandInput aria-label="Command" />
        <SmallArrow />
      </CommandBox>
      <StatusButtons>
        <StatusButton type="button" aria-label="Clear errors">
          <svg width="16" height="10" viewBox="0 0 16 10"><path d="M3 2h10M3 5h10M3 8h10" stroke="#3b1d1d" /><path d="M4 1l8 8M12 1L4 9" stroke="#c51f27" strokeWidth="2.200" /></svg>
        </StatusButton>
        <StatusButton type="button" aria-label="Build lighting">
          <svg width="16" height="10" viewBox="0 0 16 10"><path d="M8 0h2v5H8z" fill="#3c3c3c" /><path d="M7 9l1-5h2l1 5z" fill="#d9ca35" stroke="#8a7d14" strokeWidth="0.500" /></svg>
        </StatusButton>
        <StatusButton type="button" aria-label="Build paths">
          <svg width="16" height="10" viewBox="0 0 16 10"><path d="M6 0v10M11 0v10" stroke="#555" strokeWidth="2" /><path d="M8 6h2v4H8z" fill="#c7a83a" /></svg>
        </StatusButton>
        <StatusButton type="button" aria-label="Level saved">
          <svg width="16" height="10" viewBox="0 0 16 10"><path d="M1 4l5-3 5 2v5L6 10 1 8z" fill="#51645f" stroke="#1d2825" /><path d="M7 5l3 3 5-7" fill="none" stroke="#1f9c2a" strokeWidth="2.200" /></svg>
        </StatusButton>
      </StatusButtons>
      <StatusFlex $grow={202}>Current Level:  Persistent Level</StatusFlex>
      <StatusFlex $grow={410}><PositionText>Position: (0.00, 252.07, 0.00)</PositionText></StatusFlex>
      <StatusCell $w={41}>None</StatusCell>
      <StatusCell $w={41}>None</StatusCell>
      <StatusCell $w={41}>None</StatusCell>
      <StatusCell $w={41}>None</StatusCell>
      <Snap width={51} name="Grid snap" label="8" icon={<svg width="10" height="9" viewBox="0 0 10 9"><path d="M2 0v8h8M2 5h6M5 2v6M2 2h5M7 4v4" fill="none" stroke="#333" strokeWidth="0.800" /></svg>} />
      <Gap />
      <Snap width={46} name="Rotation snap" label="~6" icon={<svg width="10" height="9" viewBox="0 0 10 9"><path d="M1 8h8M1 8l4-7 3 7M5 2l3 2" fill="none" stroke="#222" strokeWidth="1.200" /></svg>} />
      <Gap />
      <Snap width={41} name="Scale snap" label="5%" />
      <Gap />
      <Snap width={38} name="Autosave" checked={false} icon={<svg width="11" height="11" viewBox="0 0 11 11"><path d="M0 0h10v10H0z" fill="#4a3d2e" /><path d="M3 0h4v3H3z" fill="#ddd" /><path d="M5 5l5 5M10 5l-5 5" stroke="#d3222a" strokeWidth="2" /></svg>} />
      <Separator $l={8} $r={8} />
    </StatusBar>
  );
}

const Gap = styled.span`
  width: 6px;
`;

const PositionText = styled.span`
  display: block;
  margin-left: 50%;
`;

const trayIcons: React.ReactNode[] = [
  <path d="M4 10l4-5 4 5z" fill="#fff" />,
  <><path d="M5 3h5v11H5z" fill="#a7adb5" /><circle cx="11" cy="6" r="3.500" fill="#c9252b" /></>,
  <><circle cx="7" cy="7" r="5.500" fill="#ccd6de" stroke="#5a6570" /><path d="M4 4h4v5H4z" fill="#8b3d8f" /><path d="M9 9h5v5H9z" fill="#aad43d" /></>,
  <path d="M4 2v13M4 3h4l1 2h5v5H9L8 9H4z" fill="#fff" stroke="#fff" />,
  <><path d="M5 5h9v7H5z" fill="#2b4a72" stroke="#fff" strokeWidth="1.500" /><path d="M2 2v5h3M6 14h7" fill="none" stroke="#fff" strokeWidth="1.500" /></>,
  <><path d="M3 6h3l4-4v12l-4-4H3z" fill="#fff" /><path d="M12 5q2 3 0 6" fill="none" stroke="#dfe8f2" strokeWidth="1.200" /></>,
];

function SystemTaskbar() {
  return (
    <TaskBar>
      <TaskButton type="button" aria-label="Start" $w={38}>
        <svg width="24" height="24" viewBox="0 0 24 24">
          <circle cx="12" cy="12" r="11.500" fill="#1f5c92" stroke="#9ac6e2" />
          <path d="M3 9q9-8 18 0-2-7-9-7T3 9z" fill="#a8cbe4" opacity="0.700" />
          <path d="M6 7.500q3-2 5.500-.5l-1 4.500q-3-1-5.500.5z" fill="#e2562b" />
          <path d="M12.500 7.500q3 1.200 6-.5l-1.300 5q-3 1.300-5.700 0z" fill="#8cc540" />
          <path d="M4.800 13q3-1.600 5.500-.3l-1 4.300q-2.500-1-5 .4z" fill="#46a3e0" />
          <path d="M11.300 13q3 1.300 5.700.2l-1.200 4.600q-3 1.200-5.500-.3z" fill="#f8cf3c" />
        </svg>
      </TaskButton>
      <TaskButton type="button" aria-label="Internet Explorer" $w={41}>
        <svg width="22" height="22" viewBox="0 0 22 22">
          <circle cx="11" cy="11" r="6.500" fill="none" stroke="#1d74cf" strokeWidth="3.600" />
          <path d="M6 11.500h11" stroke="#8ed0f5" strokeWidth="2" />
          <path d="M2 19Q-1 14 9 6t11-3q1 2-2 5" fill="none" stroke="#e8c64b" strokeWidth="1.800" />
        </svg>
      </TaskButton>
      <TaskButton type="button" aria-label="Explorer" $w={41}>
        <svg width="22" height="20" viewBox="0 0 22 20">
          <path d="M1 3h8l2 2h10v13H1z" fill="#ecd98c" stroke="#b99c45" />
          <path d="M4 1h4v3H4zM13 2h4v3h-4z" fill="#6fae57" />
          <path d="M1 7h20v5H1z" fill="#f7ebb4" />
          <path d="M6 19v-6h10v6h-3v-3H9v3z" fill="#8fcdf0" stroke="#4b93c0" />
        </svg>
      </TaskButton>
      <TaskButton type="button" aria-label="Media Player" $w={43}>
        <svg width="18" height="18" viewBox="0 0 18 18">
          <path d="M2 1h15v15H2z" fill="#8cc6ea" opacity="0.900" />
          <circle cx="8" cy="9" r="6" fill="#ee7a2a" stroke="#f5b989" />
          <path d="M6 5l6 4-6 4z" fill="#fff" />
        </svg>
      </TaskButton>
      <TaskButton type="button" aria-label="UDK" $w={40} $state="active">
        <svg width="18" height="20" viewBox="0 0 18 20">
          <path d="M1 1h16v15l-8 3-8-3z" fill="#15151b" />
          <text x="9" y="12" textAnchor="middle" fontFamily="Roboto, sans-serif" fontSize="8" fontWeight="700" fill="#fff">UDK</text>
          <path d="M6 15l3 1 3-1" fill="none" stroke="#a32a22" />
        </svg>
      </TaskButton>
      <TaskButton type="button" aria-label="Camtasia" $w={41} $state="open">
        <svg width="20" height="20" viewBox="0 0 20 20">
          <path d="M1 1l16 1 2 14-14 2z" fill="#b9cc62" stroke="#8aa340" />
          <path d="M2 6q5 4 15 1M4 15q3-6 14-5" fill="none" stroke="#e8efb4" strokeWidth="1.600" />
        </svg>
      </TaskButton>
      <Tray>
        {trayIcons.map((shape, i) => (
          <svg key={i} width="15" height="14" viewBox="0 0 16 16" aria-hidden="true">{shape}</svg>
        ))}
        <Clock><span>11:47 PM</span><span>5/28/2011</span></Clock>
        <ShowDesktop type="button" aria-label="Show desktop" />
      </Tray>
    </TaskBar>
  );
}

export default function App() {
  return (
    <Window>
      <GlobalStyle />
      <TitleBar>
        <Icon name="udkSmall" size={10} />
        <AppTitle>DM-BuckysMap - Unreal Development Kit (64-bit, DX9)</AppTitle>
        <CaptionButtons>
          <CaptionButton type="button" aria-label="Minimize"><svg width="8" height="8" viewBox="0 0 8 8"><path d="M0 5h8v2H0z" fill="#fff" /></svg></CaptionButton>
          <CaptionButton type="button" aria-label="Restore"><svg width="8" height="8" viewBox="0 0 8 8"><path d="M2 1h5v5H2zM1 3h4v4H1z" fill="none" stroke="#fff" /></svg></CaptionButton>
          <CaptionButton type="button" aria-label="Close" $close><svg width="7" height="7" viewBox="0 0 7 7"><path d="M1 1l5 5M6 1L1 6" stroke="#fff" strokeWidth="1.800" /></svg></CaptionButton>
        </CaptionButtons>
      </TitleBar>
      <MenuBar>
        {['File', 'Edit', 'View', 'Brush', 'Build', 'Play', 'Tools', 'Help'].map((item) => (
          <MenuLink key={item} href="#">{item}</MenuLink>
        ))}
      </MenuBar>
      <MainToolbar />
      <Main>
        <SidePalette />
        <Viewports>
          <Viewport>
            <ViewToolbar letter="S" />
            <Canvas><SideScene /></Canvas>
          </Viewport>
          <Viewport>
            <ViewToolbar letter="F" />
            <Canvas $active><FrontScene /></Canvas>
          </Viewport>
          <Viewport>
            <ViewToolbar letter="P" perspective />
            <Canvas><PerspectiveScene /></Canvas>
          </Viewport>
          <Viewport>
            <ViewToolbar letter="T" />
            <Canvas><TopScene /></Canvas>
          </Viewport>
        </Viewports>
      </Main>
      <Status />
      <SystemTaskbar />
    </Window>
  );
}
